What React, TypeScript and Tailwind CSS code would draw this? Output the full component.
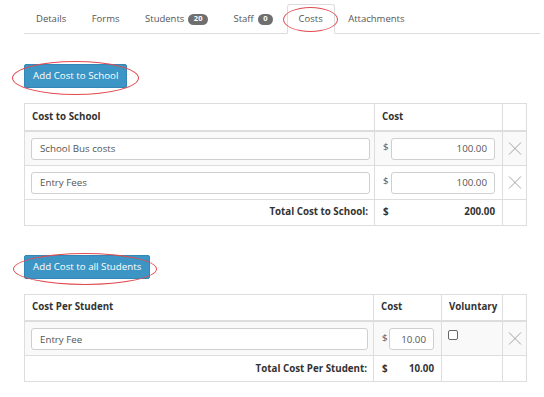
const tabs = [
  { label: 'Details' },
  { label: 'Forms' },
  { label: 'Students', badge: '20' },
  { label: 'Staff', badge: '0' },
  { label: 'Costs', active: true },
  { label: 'Attachments' },
]

function RemoveIcon() {
  return (
    <svg width="14" height="13" viewBox="0 0 14 13" className="mx-auto block" aria-hidden="true">
      <path d="M1 0.5 L13 12.5 M13 0.5 L1 12.5" stroke="#a3a3a3" strokeWidth="1" fill="none" />
    </svg>
  )
}

function TextBox({ value, right = false, width }: { value: string; right?: boolean; width: string }) {
  return (
    <input
      readOnly
      value={value}
      className={`${width} h-[22px] border border-[#cfcfcf] rounded-[3px] bg-white px-[8px] text-[#555] outline-none ${right ? 'text-right pr-[7px]' : ''}`}
    />
  )
}

function Circled({ className }: { className: string }) {
  return (
    <span
      aria-hidden="true"
      className={`pointer-events-none absolute rounded-[50%] border border-[#e24a4f] ${className}`}
    />
  )
}

const th = 'h-[27px] border border-[#ddd] border-b-2 px-[7px] text-left align-middle font-bold text-[#333]'
const td = 'border border-[#ddd] px-[6px] pt-[6px] pb-[5px] align-top'

export default function App() {
  return (
    <div
      className="relative w-[544px] h-[397px] overflow-hidden bg-white text-[9.75px] leading-[14px] text-[#555]"
      style={{ fontFamily: '"Open Sans", "Liberation Sans", sans-serif' }}
    >
      <div className="pl-[24px] pr-[4px] pt-[4px]">
        {/* tabs */}
        <ul className="flex border-b border-[#ddd] text-[9.5px]">
          {tabs.map(tab => (
            <li
              key={tab.label}
              className={`relative -mb-px mr-[1.5px] flex h-[30px] items-center rounded-t-[3px] border px-[11px] ${
                tab.active ? 'border-[#ddd] border-b-white bg-white' : 'border-transparent'
              }`}
            >
              {tab.label}
              {tab.badge && (
                <span className="ml-[4px] inline-flex h-[11px] items-center justify-center rounded-full bg-[#6f6f6f] px-[5.5px] text-[7.5px] font-bold leading-none text-white">
                  {tab.badge}
                </span>
              )}
              {tab.active && <Circled className="left-[-5px] top-[2px] h-[25px] w-[55px]" />}
            </li>
          ))}
        </ul>

        {/* cost to school */}
        <div className="relative mt-[30px] inline-block">
          <button className="h-[24px] rounded-[2px] border border-[#3487b4] bg-[#3c95c4] px-[8px] text-white">
            Add Cost to School
          </button>
          <Circled className="left-[-12px] top-[-3px] h-[34px] w-[127px]" />
        </div>

        <table className="mt-[15px] w-[502px] table-fixed border-collapse">
          <colgroup>
            <col className="w-[350px]" />
            <col className="w-[128px]" />
            <col className="w-[24px]" />
          </colgroup>
          <thead>
            <tr>
              <th className={th}>Cost to School</th>
              <th className={th}>Cost</th>
              <th className={th}></th>
            </tr>
          </thead>
          <tbody>
            {['School Bus costs', 'Entry Fees'].map((name, i) => (
              <tr key={name} className={i === 0 ? 'bg-[#f9f9f9]' : ''}>
                <td className={td}>
                  <TextBox value={name} width="w-[339px]" />
                </td>
                <td className={`${td} pl-[8px] pr-[7px]`}>
                  <div className="flex items-center justify-between">
                    <span className="-mt-[3px]">$</span>
                    <TextBox value="100.00" right width="w-[104px]" />
                  </div>
                </td>
                <td className="border border-[#ddd] align-middle">
                  <RemoveIcon />
                </td>
              </tr>
            ))}
            <tr>
              <td className="h-[26px] border border-[#ddd] px-[6px] text-right font-bold text-[#333]">
                Total Cost to School:
              </td>
              <td className="border border-[#ddd] pl-[8px] pr-[7px] font-bold text-[#333]">
                <div className="flex justify-between">
                  <span>$</span>
                  <span>200.00</span>
                </div>
              </td>
              <td className="border border-[#ddd]"></td>
            </tr>
          </tbody>
        </table>

        {/* cost per student */}
        <div className="relative mt-[29px] inline-block">
          <button className="h-[24px] rounded-[2px] border border-[#3487b4] bg-[#3c95c4] px-[8px] text-white">
            Add Cost to all Students
          </button>
          <Circled className="left-[-11px] top-[-2px] h-[32px] w-[144px]" />
        </div>

        <table className="mt-[15px] w-[502px] table-fixed border-collapse">
          <colgroup>
            <col className="w-[349px]" />
            <col className="w-[68px]" />
            <col className="w-[61px]" />
            <col className="w-[24px]" />
          </colgroup>
          <thead>
            <tr>
              <th className={th}>Cost Per Student</th>
              <th className={th}>Cost</th>
              <th className={`${th} px-[6px]`}>Voluntary</th>
              <th className={th}></th>
            </tr>
          </thead>
          <tbody>
            <tr className="bg-[#f9f9f9]">
              <td className={td}>
                <TextBox value="Entry Fee" width="w-[337px]" />
              </td>
              <td className={`${td} pl-[8px] pr-[7px]`}>
                <div className="flex items-center justify-between">
                  <span className="-mt-[3px]">$</span>
                  <TextBox value="10.00" right width="w-[45px]" />
                </div>
              </td>
              <td className={`${td} pt-[8px]`}>
                <span className="block h-[10px] w-[10px] rounded-[2px] border border-[#666] bg-white" />
              </td>
              <td className="border border-[#ddd] align-middle">
                <RemoveIcon />
              </td>
            </tr>
            <tr>
              <td className="h-[26px] border border-[#ddd] px-[6px] text-right font-bold text-[#333]">
                Total Cost Per Student:
              </td>
              <td className="border border-[#ddd] pl-[8px] pr-[7px] font-bold text-[#333]">
                <div className="flex justify-between">
                  <span>$</span>
                  <span>10.00</span>
                </div>
              </td>
              <td className="border border-[#ddd]"></td>
              <td className="border border-[#ddd]"></td>
            </tr>
          </tbody>
        </table>
      </div>
    </div>
  )
}
